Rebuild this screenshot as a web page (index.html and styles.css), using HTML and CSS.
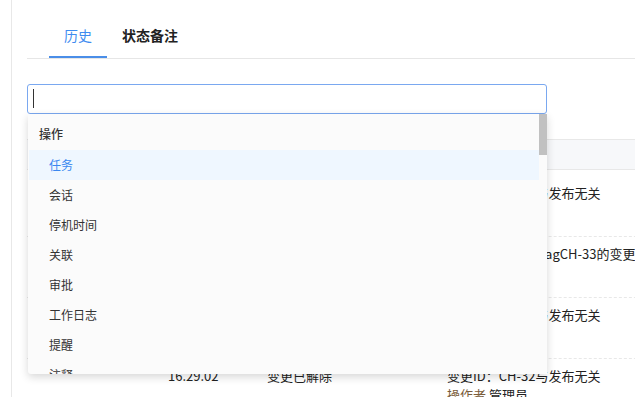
FILE: index.html
```html
<!DOCTYPE html>
<html lang="zh">
<head>
<meta charset="utf-8">
<link rel="stylesheet" href="styles.css">
</head>
<body>
<div class="page">
  <div class="tabs">
    <div class="tab active">历史</div>
    <div class="tab bold">状态备注</div>
  </div>
  <div class="search-wrap">
    <div class="input"><span class="caret"></span></div>
    <div class="dropdown">
      <div class="list">
        <div class="group">操作</div>
        <div class="item hover">任务</div>
        <div class="item">会话</div>
        <div class="item">停机时间</div>
        <div class="item">关联</div>
        <div class="item">审批</div>
        <div class="item">工作日志</div>
        <div class="item">提醒</div>
        <div class="item">注释</div>
        <div class="item">附件</div>
      </div>
      <div class="scrollbar"><div class="thumb"></div></div>
    </div>
  </div>
  <div class="table">
    <div class="thead"><span class="c1">时间</span><span class="c2">操作</span><span class="c3">详情</span></div>
    <div class="row first">
      <div class="c1"><div>2023-05-12</div><div>16:31:45</div></div>
      <div class="c2"><div>变更已关联</div></div>
      <div class="c3"><div>变更ID：CH-35与发布无关</div><div><span class="muted">操作者</span> 管理员</div></div>
    </div>
    <div class="row">
      <div class="c1"><div>2023-05-12</div><div>16:30:10</div></div>
      <div class="c2"><div>变更已更新</div></div>
      <div class="c3"><div>变更ID：CH-34 TagCH-33的变更</div><div><span class="muted">操作者</span> 管理员</div></div>
    </div>
    <div class="row">
      <div class="c1"><div>2023-05-12</div><div>16:29:40</div></div>
      <div class="c2"><div>变更已解除</div></div>
      <div class="c3"><div>变更ID：CH-33与发布无关</div><div><span class="muted">操作者</span> 管理员</div></div>
    </div>
    <div class="row">
      <div class="c1"><div>16.29.02</div></div>
      <div class="c2"><div>变更已解除</div></div>
      <div class="c3"><div>变更ID：CH-32与发布无关</div><div><span class="muted">操作者</span> 管理员</div></div>
    </div>
  </div>
</div>
</body>
</html>
```
FILE: styles.css
```css
* { box-sizing: border-box; }
html, body { margin: 0; padding: 0; background: #fff; }
body {
  font-family: "Noto Sans CJK SC", "Noto Sans", sans-serif;
  color: #333;
  width: 635px;
  height: 397px;
  overflow: hidden;
}
.page {
  margin-left: 11px;
  border-left: 1px solid #e8e8e8;
  height: 397px;
  padding-left: 15px;
  padding-top: 14px;
}
.tabs {
  display: flex;
  border-bottom: 1px solid #e6e6e6;
  padding-left: 22px;
  margin-right: -20px;
}
.tab {
  font-size: 14px;
  line-height: 20px;
  padding: 11px 15px 11px;
  border-bottom: 2px solid transparent;
  color: #222;
}
.tab.active {
  color: #3f8cf0;
  border-bottom-color: #4a8ee8;
}
.tab.bold { font-weight: 700; }
.search-wrap {
  position: relative;
  margin-top: 25px;
  width: 520px;
}
.input {
  height: 30px;
  border: 1px solid #7aa8f0;
  border-radius: 3px;
  background: #fff;
  padding: 4px 5px;
}
.caret {
  display: block;
  width: 1px;
  height: 19px;
  background: #333;
}
.dropdown {
  position: absolute;
  left: 1px;
  top: 30px;
  width: 519px;
  height: 260px;
  background: #fbfbfb;
  box-shadow: 0 3px 8px rgba(0, 0, 0, 0.16);
  display: flex;
  z-index: 5;
  border-radius: 0 0 3px 3px;
}
.list {
  flex: 1;
  overflow: hidden;
  padding-left: 1px;
}
.group {
  font-size: 12px;
  font-weight: 500;
  color: #333;
  line-height: 24px;
  padding: 8px 10px 4px;
}
.item {
  font-size: 12px;
  line-height: 30px;
  height: 30px;
  padding-left: 20px;
  color: #333;
}
.item.hover {
  background: #eff7ff;
  color: #3b88f0;
}
.scrollbar {
  width: 8px;
  background: #fbfbfb;
}
.thumb {
  width: 8px;
  height: 41px;
  background: #c1c1c1;
}
.table {
  position: absolute;
  top: 139px;
  left: 27px;
  width: 640px;
  font-size: 13px;
  color: #222;
}
.thead {
  height: 31px;
  background: #f7f8fa;
  border-top: 1px solid #e8e8e8;
  border-bottom: 1px solid #e8e8e8;
  display: flex;
  align-items: center;
}
.thead span, .row > div { flex: none; }
.c1 { width: 240px; padding-left: 141px; }
.c2 { width: 180px; padding-left: 0; }
.c3 { flex: 1; }
.row {
  display: flex;
  height: 61px;
  padding-top: 7px;
  line-height: 19px;
  border-top: 1px dashed #e8e8e8;
}
.row.first {
  border-top: none;
  padding-top: 13px;
  height: 66px;
}
.row .c1 { padding-left: 141px; width: 240px; }
.row .c2 { width: 180px; }
.muted { color: #7a5c3a; }
.table .c3 { width: 220px; }
```
